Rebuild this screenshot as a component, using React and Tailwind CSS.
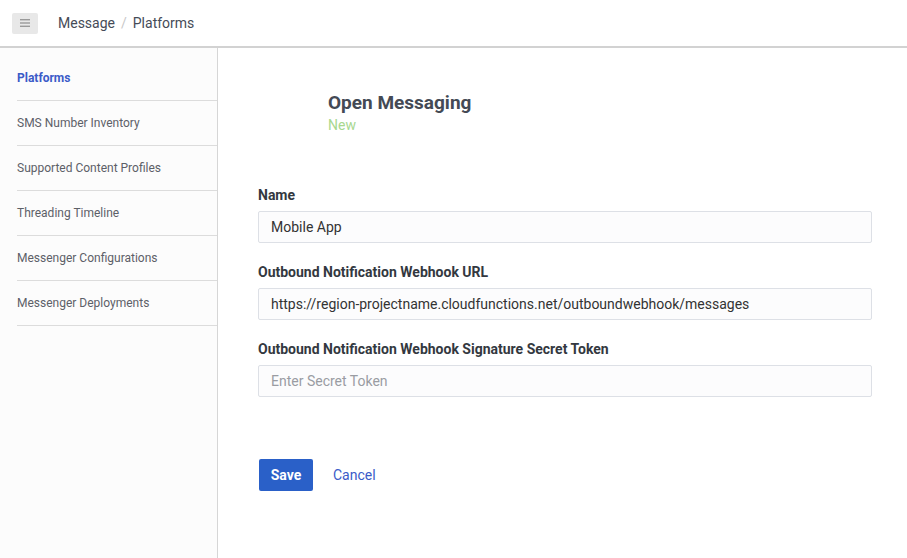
import React from 'react';

const navItems = [
  'Platforms',
  'SMS Number Inventory',
  'Supported Content Profiles',
  'Threading Timeline',
  'Messenger Configurations',
  'Messenger Deployments',
];

const Field = ({ label, value, placeholder }) => (
  <div className="flex flex-col">
    <label className="text-[14px] font-bold text-[#333840] leading-[20px] mb-[6px]">{label}</label>
    <input
      className="h-[32px] w-full border border-[#dde0e6] rounded-[2px] bg-[#fcfcfd] px-[12px] text-[14px] text-[#333] placeholder:text-[#9a9ca3] outline-none"
      defaultValue={value}
      placeholder={placeholder}
    />
  </div>
);

const App = () => {
  return (
    <div className="h-[558px] w-[907px] flex flex-col bg-white font-['Roboto',sans-serif] overflow-hidden">
      {/* Header */}
      <header className="h-[48px] shrink-0 flex items-center border-b-2 border-[#d2d2d2] bg-white">
        <button className="ml-[12px] w-[26px] h-[21px] rounded-[2px] bg-[#e8e8e8] flex items-center justify-center">
          <svg width="10" height="8" viewBox="0 0 10 8">
            <rect x="0" y="0" width="10" height="1.4" fill="#9a9a9a" />
            <rect x="0" y="3.3" width="10" height="1.4" fill="#9a9a9a" />
            <rect x="0" y="6.6" width="10" height="1.4" fill="#9a9a9a" />
          </svg>
        </button>
        <nav className="ml-[20px] flex items-center text-[14px] text-[#454b57]">
          <span>Message</span>
          <span className="mx-[6px] text-[#c8c8c8]">/</span>
          <span>Platforms</span>
        </nav>
      </header>

      <div className="flex flex-1 min-h-0">
        {/* Sidebar */}
        <aside className="w-[218px] shrink-0 bg-[#fcfcfc] border-r border-[#d6d6d6] pt-[8px]">
          {navItems.map((item, i) => (
            <div
              key={item}
              className={`ml-[17px] h-[45px] flex items-center border-b border-[#dcdcdc] text-[12px] ${
                i === 0 ? 'font-bold text-[#3b5bc8]' : 'text-[#5c6068]'
              }`}
            >
              {item}
            </div>
          ))}
        </aside>

        {/* Main */}
        <main className="flex-1 pl-[40px] pr-[35px]">
          <div className="pl-[70px] pt-[42px]">
            <h1 className="text-[19px] font-bold text-[#444a55] leading-[25px]">Open Messaging</h1>
            <div className="text-[14px] text-[#a8d88f] leading-[20px]">New</div>
          </div>

          <div className="mt-[50px] flex flex-col gap-[19px]">
            <Field label="Name" value="Mobile App" />
            <Field
              label="Outbound Notification Webhook URL"
              value="https://region-projectname.cloudfunctions.net/outboundwebhook/messages"
            />
            <Field label="Outbound Notification Webhook Signature Secret Token" placeholder="Enter Secret Token" />
          </div>

          <div className="mt-[62px] flex items-center">
            <button className="ml-[1px] w-[54px] h-[32px] rounded-[2px] bg-[#2a60c8] text-white text-[14px] font-bold">
              Save
            </button>
            <button className="ml-[20px] text-[14px] text-[#3b5bc8]">Cancel</button>
          </div>
        </main>
      </div>
    </div>
  );
};

export default App;
